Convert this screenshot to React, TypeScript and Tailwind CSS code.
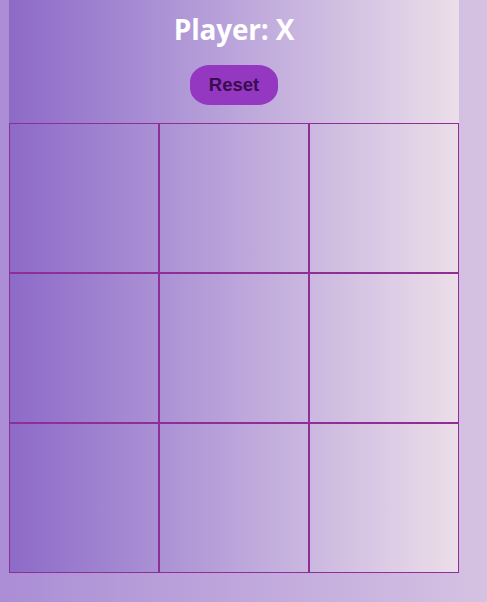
const CELLS = Array.from({ length: 9 }, (_, i) => i);

export default function App() {
  return (
    <div className="min-h-[602px] w-full bg-gradient-to-r from-[#aa8dd5] to-[#d5c2e2] font-['Liberation_Sans',sans-serif]">
      <div className="ml-[9px] flex w-[450px] flex-col items-center bg-gradient-to-r from-[#8d6ac8] to-[#ecdee9]">
        <h1 className="mt-[12px] h-[34px] font-['Open_Sans',sans-serif] text-[28px] font-bold leading-[34px] tracking-[-0.2px] text-white">
          Player: X
        </h1>
        <button className="mt-[19px] h-[40px] w-[88px] rounded-[20px/17px] bg-[#9438c1] text-[18.5px] font-bold text-[#3a0c50]">
          Reset
        </button>
        <div className="mt-[18px] grid w-[450px] grid-cols-3">
          {CELLS.map((i) => (
            <div key={i} className="h-[150px] w-[150px] border border-[#8f2f95]" />
          ))}
        </div>
      </div>
    </div>
  );
}
